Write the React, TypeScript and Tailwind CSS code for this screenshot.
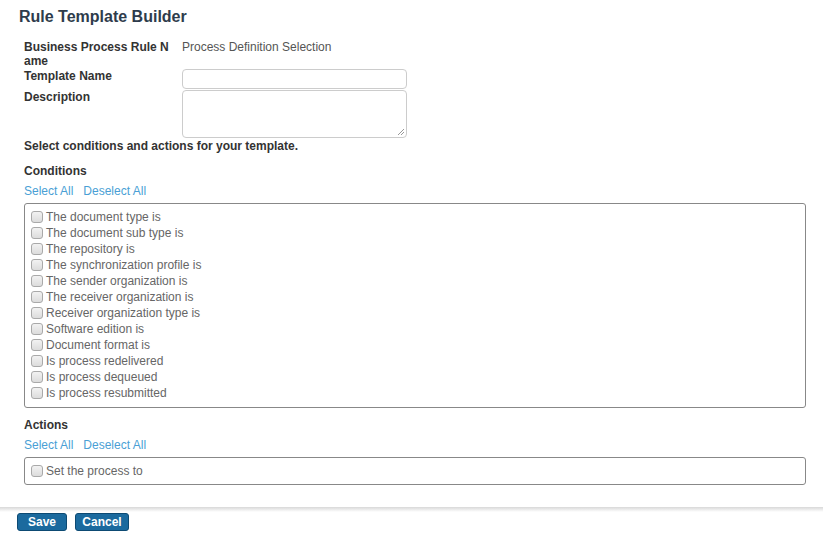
const conditions = [
  "The document type is",
  "The document sub type is",
  "The repository is",
  "The synchronization profile is",
  "The sender organization is",
  "The receiver organization is",
  "Receiver organization type is",
  "Software edition is",
  "Document format is",
  "Is process redelivered",
  "Is process dequeued",
  "Is process resubmitted",
];

function Check({ label }: { label: string }) {
  return (
    <label className="flex h-4 items-center gap-[3px] text-[12px] leading-4 text-[#666]">
      <span className="h-[12px] w-[12px] shrink-0 rounded-[3px] border border-[#a9a9a9] bg-gradient-to-b from-[#f2f2f2] to-[#dcdcdc]" />
      <span>{label}</span>
    </label>
  );
}

function Links() {
  return (
    <div className="mt-[6px] flex h-[14px] items-center gap-[10px] text-[12px] leading-[14px] text-[#4a9fd5]">
      <span>Select All</span>
      <span>Deselect All</span>
    </div>
  );
}

export default function App() {
  return (
    <div className="h-[536px] w-[823px] bg-white font-['Liberation_Sans',Arial,sans-serif]">
      <div className="px-[19px] pt-[8px]">
        <h1 className="text-[16px] font-bold leading-[18px] text-[#2e3c4c]">Rule Template Builder</h1>
      </div>

      <div className="ml-[24px] mt-[14px] text-[12px] leading-[14px] text-[#333]">
        <div className="flex">
          <div className="w-[158px] font-bold">
            Business Process Rule N
            <br />
            ame
          </div>
          <div className="text-[#555]">Process Definition Selection</div>
        </div>
        <div className="mt-[1px] flex">
          <div className="w-[158px] font-bold">Template Name</div>
          <div className="h-[20px] w-[225px] rounded-[4px] border border-[#ccc] bg-white" />
        </div>
        <div className="mt-[1px] flex">
          <div className="w-[158px] font-bold">Description</div>
          <div className="relative h-[48px] w-[225px] rounded-[4px] border border-[#ccc] bg-white">
            <svg className="absolute bottom-[2px] right-[2px]" width="7" height="7" viewBox="0 0 7 7">
              <path d="M1 7 L7 1 M4 7 L7 4" stroke="#999" strokeWidth="1" />
            </svg>
          </div>
        </div>
        <div className="mt-[1px] font-bold">Select conditions and actions for your template.</div>
      </div>

      <div className="ml-[24px] mr-[17px] mt-[11px] text-[12px] leading-[14px]">
        <div className="font-bold text-[#333]">Conditions</div>
        <Links />
        <div className="mt-[5px] rounded-[3px] border border-[#888] px-[6px] pb-[6px] pt-[5px]">
          {conditions.map((c) => (
            <Check key={c} label={c} />
          ))}
        </div>

        <div className="mt-[10px] font-bold text-[#333]">Actions</div>
        <Links />
        <div className="mt-[5px] flex h-[28px] items-center rounded-[3px] border border-[#888] px-[6px]">
          <Check label="Set the process to" />
        </div>
      </div>

      <div className="mt-[22px] h-[5px] w-full bg-gradient-to-b from-[#d8d8d8] to-white" />

      <div className="ml-[17px] mt-[1px] flex gap-[8px]">
        <button className="h-[18px] w-[50px] rounded-[3px] border border-[#0d4a73] bg-[#1b6a9e] text-[12px] font-bold leading-[16px] text-white">
          Save
        </button>
        <button className="h-[18px] w-[54px] rounded-[3px] border border-[#0d4a73] bg-[#1b6a9e] text-[12px] font-bold leading-[16px] text-white">
          Cancel
        </button>
      </div>
    </div>
  );
}
